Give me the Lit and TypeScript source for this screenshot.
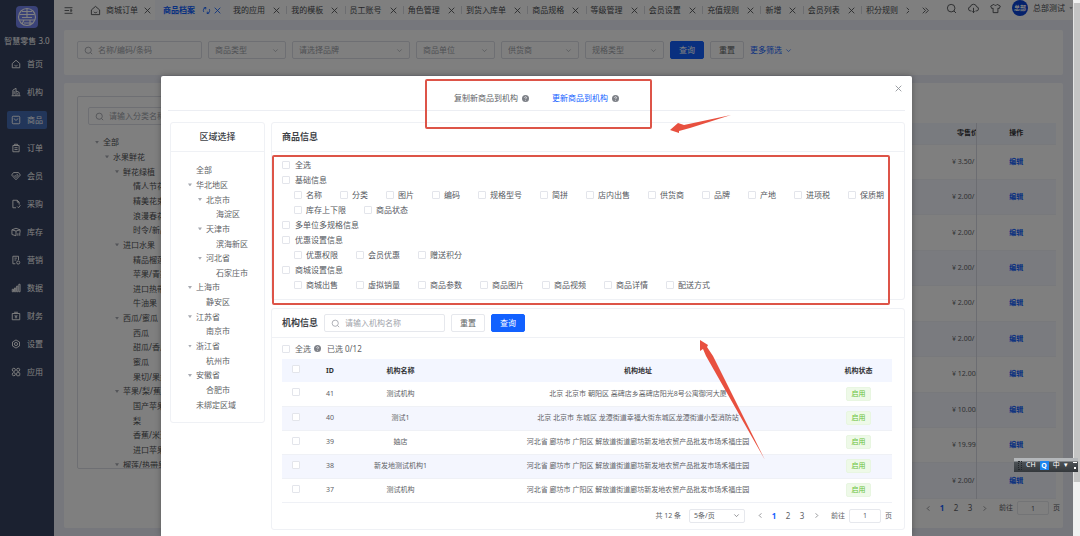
import { LitElement, html, css, svg, nothing } from "lit";
import { customElement, state } from "lit/decorators.js";
import { classMap } from "lit/directives/class-map.js";
import { styleMap } from "lit/directives/style-map.js";

const glyphs: Record<string, unknown> = {
  home: svg`<path d="M2 7.2 8 2l6 5.2V14H2z"/><path d="M5.5 10c1.4 1.6 3.6 1.6 5 0"/>`,
  org: svg`<path d="M3 14V5l5-3v12M8 6.500l5 2V14M1 14h14M5 6.500v5M10.500 10v2"/>`,
  goods: svg`<rect x="2" y="2" width="12" height="12" rx="1.5"/><path d="M5 5.5c.8 3.6 5.200 3.6 6 0"/>`,
  order: svg`<path d="M3 4h10v10H3zM5.500 4V2h5v2M5.500 7.500h5M5.500 10.500h5"/>`,
  member: svg`<path d="M4 2.500h8L15 6.500 8 14 1 6.500z"/><path d="M4.500 7 8 10.500 11.500 7 9.500 5.500 7 8"/>`,
  buy: svg`<path d="M8 14H3V2h7l3 3v4M10 2v3h3M10 12l2 2 3-4"/>`,
  stock: svg`<path d="M1.500 4.500 8 2l6.500 2.500V9M1.500 4.500V12L8 14V6.500M1.500 4.500 8 6.500l6.500-2M11 10v4M14 9v5"/>`,
  market: svg`<path d="M7 14H3V2h9v6M5.500 5h4M5.500 8h3"/><circle cx="11.500" cy="12" r="2.500"/>`,
  data: svg`<path d="M2 10h2v4H2zM5.500 8h2v6h-2zM9 5h2v9H9zM12.500 2h2v12h-2z"/>`,
  finance: svg`<path d="M2 4h12v10H2zM5 2h6M6 6.500 8 9l2-2.500M8 9v3M6 9.500h4"/>`,
  setting: svg`<path d="M8 1.500 13.600 4.800v6.400L8 14.500 2.400 11.200V4.800z"/><circle cx="8" cy="8" r="2.500"/>`,
  apps: svg`<circle cx="4.500" cy="4.500" r="2.500"/><circle cx="11.500" cy="4.500" r="2.500"/><circle cx="4.500" cy="11.500" r="2.500"/><rect x="9" y="9" width="5" height="5" rx="1"/>`,
  close: svg`<path d="M3 3l10 10M13 3 3 13"/>`,
  refresh: svg`<path d="M3 10.500A5.500 5.500 0 0 1 7 2.600M13 5.500a5.500 5.500 0 0 1-4 7.900M3 3.500l4-1-.5 3.500M13 12.500l-4 1 .5-3.500"/>`,
  fold: svg`<path d="M1 3h14M1 8h8M1 13h14M12 6l2.500 2L12 10z"/>`,
  search: svg`<circle cx="7.500" cy="7.500" r="5.500"/><path d="m11.500 11.500 3 3"/>`,
  down: svg`<path d="m3 5.500 5 5 5-5"/>`,
  left: svg`<path d="m10 3-5 5 5 5"/>`,
  right: svg`<path d="m6 3 5 5-5 5"/>`,
  more: svg`<path d="m3 3 5 5-5 5M8 3l5 5-5 5"/>`,
  cloud: svg`<path d="M5 11.500H4a3 3 0 0 1-.5-6 4.600 4.600 0 0 1 9 0 3 3 0 0 1-.5 6h-1M8 7v7M6 12l2 2 2-2"/>`,
  shirt: svg`<path d="M5.500 2 1 4.500l1.500 3.500L4.500 7.500V14h7V7.500l2 .5L15 4.500 10.500 2c-1 2-4 2-5 0z"/>`,
};

const icon = (name: string, kind = "") =>
  html`<svg class="icon ${kind}" viewBox="0 0 16 16" aria-hidden="true">${glyphs[name]}</svg>`;

const help = html`<svg class="help" viewBox="0 0 16 16" aria-hidden="true">
  <circle cx="8" cy="8" r="8" fill="#7d8087" />
  <path d="M5.700 6.300c0-3 4.600-3 4.600-.2C10.300 7.800 8 7.800 8 9.600" fill="none" stroke="#fff" stroke-width="1.600" />
  <circle cx="8" cy="12" r="1" fill="#fff" />
</svg>`;

type Node = [label: string, level: number, open?: boolean];

const menu: [string, string][] = [
  ["home", "首页"], ["org", "机构"], ["goods", "商品"], ["order", "订单"],
  ["member", "会员"], ["buy", "采购"], ["stock", "库存"], ["market", "营销"],
  ["data", "数据"], ["finance", "财务"], ["setting", "设置"], ["apps", "应用"],
];

const tabs = ["我的应用", "我的模板", "员工账号", "角色管理", "到货入库单", "商品规格",
  "等级管理", "会员设置", "充值规则", "新增", "会员列表", "积分规则"];

const filters: [string, number][] = [
  ["商品类型", 78], ["请选择品牌", 118], ["商品单位", 79], ["供货商", 78], ["规格类型", 79],
];

const categories: Node[] = [
  ["全部", 0, true], ["水果鲜花", 1, true], ["鲜花绿植", 2, true], ["情人节花束", 3],
  ["精美花束", 3], ["浪漫春花", 3], ["时令/新品", 3], ["进口水果", 2, true],
  ["精品榴莲", 3], ["苹果/青提", 3], ["进口热带果", 3], ["牛油果", 3],
  ["西瓜/蜜瓜", 2, true], ["西瓜", 3], ["甜瓜/香瓜", 3], ["蜜瓜", 3], ["果切/果盘", 3],
  ["苹果/梨/蕉", 2, true], ["国产苹果", 3], ["梨", 3], ["香蕉/米蕉", 3],
  ["进口苹果", 3], ["榴莲/热带果", 2, true],
];

const regions: Node[] = [
  ["全部", 0], ["华北地区", 0, true], ["北京市", 1, true], ["海淀区", 2],
  ["天津市", 1, true], ["滨海新区", 2], ["河北省", 1, true], ["石家庄市", 2],
  ["上海市", 0, true], ["静安区", 1], ["江苏省", 0, true], ["南京市", 1],
  ["浙江省", 0, true], ["杭州市", 1], ["安徽省", 0, true], ["合肥市", 1], ["未绑定区域", 0],
];

const fields: [string, string[]][] = [
  ["全选", []],
  ["基础信息", ["名称", "分类", "图片", "编码", "规格型号", "简拼", "店内出售", "供货商",
    "品牌", "产地", "进项税", "保质期", "库存上下限", "商品状态"]],
  ["多单位多规格信息", []],
  ["优惠设置信息", ["优惠权限", "会员优惠", "赠送积分"]],
  ["商城设置信息", ["商城出售", "虚拟销量", "商品参数", "商品图片", "商品视频", "商品详情", "配送方式"]],
];

const farm = "河北省 廊坊市 广阳区 解放道街道廊坊新发地农贸产品批发市场禾福庄园";
const orgs: [number, string, string][] = [
  [41, "测试机构", "北京 北京市 朝阳区 高碑店乡高碑店阳光8号公寓御河大厦"],
  [40, "测试1", "北京 北京市 东城区 龙潭街道幸福大街东城区龙潭街道小型消防站"],
  [39, "妯店", farm],
  [38, "新发地测试机构1", farm],
  [37, "测试机构", farm],
];

const prices = ["3.50", "2.00", "2.00", "2.00", "2.00", "2.00", "12.00", "10.00", "19.99", "2.00"];

@customElement("app-root")
export class AppRoot extends LitElement {
  @state() private mode = 1;

  static styles = css`
    :host {
      display: flex;
      position: relative;
      height: 100vh;
      overflow: hidden;
      font: 8px/12px "Noto Sans", "Noto Sans CJK SC", sans-serif;
      color: #606266;
    }
    * { box-sizing: border-box; }
    button, input, select {
      font: inherit;
      color: inherit;
      margin: 0;
      padding: 0;
      border: 0;
      background: none;
      border-radius: 2px;
      outline: 0;
    }
    a { color: inherit; text-decoration: none; }
    .icon {
      width: 9px;
      height: 9px;
      flex: none;
      fill: none;
      stroke: currentColor;
      stroke-width: 1.500;
    }
    .small { width: 7px; height: 7px; }
    .large { width: 11px; height: 11px; stroke-width: 1.300; }
    .help { width: 7px; height: 7px; flex: none; }

    .page { position: relative; display: flex; flex: 1; min-width: 0; background: #eceff8; }
    .rail { width: 7px; background: #f1f1f1; }
    .thumb { height: 90%; background: #c4c4c4; border-left: 1px solid #e4e4e4; border-top: 3px solid #f1f1f1; }

    .side { width: 54px; background: #364260; color: #fff; display: flex; flex-direction: column; align-items: center; padding-top: 6px; }
    .logo { width: 22px; height: 22px; }
    .brand { margin: 7px 0 8px; white-space: nowrap; }
    .menu { display: grid; gap: 10px; }
    .menu a { display: flex; align-items: center; gap: 6px; width: 40px; height: 18px; padding-left: 4px; border-radius: 2px; }
    .menu a .icon { width: 10px; height: 10px; }
    .menu a.on { background: #446cb4; }

    .main { flex: 1; min-width: 0; display: flex; flex-direction: column; }
    .top { display: flex; align-items: center; height: 20px; background: #fff; color: #4a4c50; white-space: nowrap; padding-left: 10px; }
    .top button { display: flex; }
    .first { display: flex; align-items: center; gap: 5px; padding: 0 3px 0 17px; }
    .active { display: flex; align-items: center; height: 20px; gap: 2px; padding: 0 8px; color: #1060ff; font-weight: 700; background: #f7f9ff; }
    .active a { margin-right: 5px; }
    .strip { flex: 1; min-width: 0; display: flex; align-items: center; justify-content: space-between; margin: 0 12px 0 3px; }
    .tab { display: flex; align-items: center; gap: 7px; height: 8px; }
    .tab + .tab { border-left: 1px solid #d8dae0; padding-left: 4px; }
    .tab:last-child button { width: 4px; overflow: hidden; }
    .tools { display: flex; align-items: center; gap: 11px; padding: 0 0 4px 16px; }
    .avatar { width: 16px; height: 16px; border-radius: 50%; background: #0b45d8; color: #fff; text-align: center; font-size: 6px; line-height: 16px; font-weight: 700; margin-right: -6px; }
    .user { display: flex; align-items: center; gap: 4px; }

    .panel { background: #fff; margin: 10px 10px 0; padding: 11px 13px; border-radius: 2px; }
    .filters { display: flex; gap: 6px; height: 46px; align-items: flex-start; }
    .box { display: flex; align-items: center; height: 18px; border: 1px solid #dcdfe6; border-radius: 2px; padding: 0 6px; gap: 5px; color: #a0a3aa; }
    .box input { flex: 1; width: 100%; min-width: 0; }
    .box input::placeholder { color: #a0a3aa; opacity: 1; }
    .box select { appearance: none; flex: 1; min-width: 0; height: 14px; }
    .wide { width: 125px; }
    .btn { height: 18px; width: 34px; border: 1px solid #dcdfe6; background: #fff; }
    .primary { background: #1261ff; border-color: #1261ff; color: #fff; }
    .link { display: flex; align-items: center; gap: 3px; height: 18px; color: #1261ff; }

    .stock { flex: 1; display: flex; gap: 20px; margin: 8px 10px 8px; padding: 13px 7px 13px 13px; }
    .cats { width: 170px; height: 373px; overflow: hidden; border: 1px solid #dcdfe6; border-radius: 2px; padding: 10px; }
    .tree { display: grid; grid-auto-rows: 1fr; margin: 0; padding: 0; list-style: none; white-space: nowrap; }
    .node { display: flex; align-items: center; gap: 4px; }
    .mark { width: 4px; height: 3px; background: #a8abb2; clip-path: polygon(0 0, 100% 0, 50% 100%); }
    .leaf { background: none; }
    .cats .tree { height: 337px; margin: 10px 0 0 7px; color: #505256; }
    .goods { flex: 1; min-width: 0; padding-top: 27px; }

    table { width: 100%; border-collapse: collapse; table-layout: fixed; font-size: 7px; line-height: 10px; text-align: center; }
    th, td { padding: 0; }
    th { color: #303133; background: #f3f6ff; font-weight: 700; }
    tbody tr:nth-child(even) { background: #f4f6fe; }
    .stocklist { height: 376px; }
    .stocklist th { height: 21px; }
    .stocklist tr { border-bottom: 1px solid #f0f2f8; }
    .money { width: 24px; text-align: left; white-space: nowrap; overflow: hidden; border-right: 1px solid #d8dbe4; }
    th.money { padding-left: 5px; }
    .act { width: 80px; }
    .act a { color: #1261ff; font-weight: 700; }

    .pager { display: flex; align-items: center; justify-content: flex-end; font-size: 7px; color: #606266; }
    .pager button { width: 14px; height: 14px; display: grid; place-items: center; font-size: 8px; }
    .pager .cur { color: #1261ff; font-weight: 700; }
    .pager input { width: 32px; height: 14px; border: 1px solid #dcdfe6; text-align: center; margin: 0 4px; }
    .pager .goto { padding-left: 8px; }
    .size { width: 56px; height: 14px; padding: 0 4px; margin: 0 8px; color: #606266; }
    .size select { height: 12px; }
    .goods .pager { padding-top: 2px; margin-right: -4px; }

    .mask { position: absolute; inset: 0; background: rgba(0, 0, 0, 0.5); display: flex; justify-content: center; padding-top: 76px; }
    .modal { position: relative; width: 70%; background: #fff; border-radius: 2px 2px 0 0; box-shadow: 0 0 6px rgba(0, 0, 0, 0.3); }
    .shut { position: absolute; top: 8px; right: 9px; display: flex; color: #8c8f95; }
    .modes { display: flex; justify-content: center; gap: 23px; height: 35px; margin: 0 7px; padding-top: 10px; border-bottom: 1px solid #eceef3; }
    .modes button { display: flex; align-items: center; gap: 4px; height: 24px; }
    .modes .cur { color: #1261ff; }
    .body { display: flex; align-items: flex-start; gap: 6px; padding: 11px 7px 0 9px; }
    .right { flex: 1; min-width: 0; display: grid; gap: 8px; }
    .card { border: 1px solid #eff1f5; border-radius: 3px; }
    .modal .box, .modal .btn:not(.primary), .pager input { border-color: #e6e8ed; }
    .area { width: 95px; }
    .head { display: flex; align-items: center; gap: 6px; height: 29px; padding: 0 10px; border-bottom: 1px solid #eff1f5; }
    .head h2 { margin: 0; font-size: 9px; line-height: 14px; font-weight: 700; color: #404247; }
    .area .head { justify-content: center; }
    .area .head h2 { font-weight: 500; }
    .area .tree { height: 249px; margin: 11px 0 10px 17px; }
    .fields { padding: 5px 10px 7px; color: #55585e; }
    .row { display: flex; flex-wrap: wrap; column-gap: 18px; padding-left: 12px; }
    .tick { display: flex; align-items: center; gap: 5px; height: 15px; }
    .check { appearance: none; display: inline-block; width: 8px; height: 8px; border: 1px solid #e3e5eb; border-radius: 1px; background: #fff; }
    .row .tick { gap: 4px; }
    .check:checked { background: #1261ff; border-color: #1261ff; }
    .find { width: 121px; }
    .sum { display: flex; align-items: center; height: 21px; gap: 3px; padding-left: 10px; }
    .sum span { padding-left: 3px; }
    .orgs { padding: 0 12px 0 10px; }
    .orgs th { height: 23px; }
    .orgs td { height: 24px; border-bottom: 1px solid #eff1f6; }
    .pick { width: 28px; }
    .pick .check { vertical-align: middle; margin-bottom: 3px; }
    .no { width: 40px; }
    .name { width: 101px; }
    .state { width: 67px; }
    .tag { display: inline-block; width: 25px; height: 14px; line-height: 12px; border: 1px solid #e8f6e1; border-radius: 2px; background: #eef9e8; color: #67c23a; }
    .orgs .pager { height: 26px; }

    .notes { position: absolute; top: 0; left: 0; width: 1080px; height: 536px; pointer-events: none; }
    .ime { position: absolute; right: 2px; top: 458px; width: 64px; height: 14px; display: flex; align-items: center; gap: 4px; padding-left: 4px; color: #fff; font-size: 7px; background: linear-gradient(#b4b7ba 0, #b4b7ba 3px, #4d5256 4px, #34383c 100%); }
    .ime b { width: 9px; height: 9px; line-height: 9px; background: #1c84ee; text-align: center; }
    .grip { width: 4px; height: 9px; border: 1px dotted #23272a; }
    .bars { width: 4px; height: 7px; border-top: 1px solid #fff; background: linear-gradient(#fff, #fff) 50% 100% / 2px 2px no-repeat; margin-left: 1px; }
  `;

  private tree(nodes: Node[]) {
    return html`<ul class="tree">
      ${nodes.map(([label, level, open]) => html`
        <li class="node" style=${styleMap({ paddingLeft: `${level * 10}px` })}>
          <i class=${classMap({ mark: true, leaf: !open })}></i>${label}
        </li>`)}
    </ul>`;
  }

  private pages(id: string) {
    return html`
      <button aria-label="上一页">${icon("left", "small")}</button>
      <button class="cur">1</button><button>2</button><button>3</button>
      <button aria-label="下一页">${icon("right", "small")}</button>
      <label class="goto" for=${id}>前往</label><input id=${id} value="1" />页`;
  }

  private check(label: string) {
    return html`<label class="tick"><input class="check" type="checkbox" />${label}</label>`;
  }

  private sidebar() {
    return html`<aside class="side">
      <svg class="logo" viewBox="0 0 22 22" aria-hidden="true">
        <rect width="22" height="22" rx="4" fill="#7484f0" />
        <g fill="none" stroke="#fff" stroke-width="1.100">
          <circle cx="11" cy="11" r="8.500" />
          <path d="M6 5.500h10M3.500 8.500h15M11 3v8M6 11.500h10M3 14h16M8 14l-2 4M14 14v5M8 17h8" />
        </g>
      </svg>
      <div class="brand">智慧零售 3.0</div>
      <nav class="menu">
        ${menu.map(([name, label]) => html`
          <a href="#" class=${label === "商品" ? "on" : ""}>${icon(name)}${label}</a>`)}
      </nav>
    </aside>`;
  }

  private topbar() {
    return html`<header class="top">
      <button aria-label="收起菜单">${icon("fold")}</button>
      <div class="first">${icon("home", "large")}<a href="#">商城订单</a>
        <button aria-label="关闭">${icon("close")}</button></div>
      <div class="active"><a href="#">商品档案</a>
        <button aria-label="刷新">${icon("refresh")}</button>
        <button aria-label="关闭">${icon("close")}</button></div>
      <nav class="strip">
        ${tabs.map((t) => html`<div class="tab"><a href="#">${t}</a>
          <button aria-label="关闭">${icon("close")}</button></div>`)}
      </nav>
      <button aria-label="更多">${icon("more")}</button>
      <div class="tools">
        ${icon("search", "large")}${icon("cloud", "large")}${icon("shirt", "large")}
        <div class="avatar">总部</div><div class="user">总部测试<i class="mark"></i></div>
      </div>
    </header>`;
  }

  private catalogue() {
    return html`
      <section class="panel filters">
        <label class="box wide">${icon("search")}<input placeholder="名称/编码/条码" aria-label="名称/编码/条码" /></label>
        ${filters.map(([label, width]) => html`
          <label class="box" style=${styleMap({ width: `${width}px` })}>
            <select aria-label=${label}><option>${label}</option></select>${icon("down", "small")}
          </label>`)}
        <button class="btn primary">查询</button>
        <button class="btn">重置</button>
        <a class="link" href="#">更多筛选${icon("down", "small")}</a>
      </section>
      <section class="panel stock">
        <div class="cats">
          <label class="box">${icon("search")}<input placeholder="请输入分类名称" aria-label="请输入分类名称" /></label>
          ${this.tree(categories)}
        </div>
        <div class="goods">
          <table class="stocklist">
            <thead><tr><th></th><th class="money">零售价</th><th class="act">操作</th></tr></thead>
            <tbody>
              ${prices.map((p) => html`<tr><td></td><td class="money">¥ ${p}/</td>
                <td class="act"><a href="#">编辑</a></td></tr>`)}
            </tbody>
          </table>
          <div class="pager">${this.pages("goods-page")}</div>
        </div>
      </section>`;
  }

  private dialog() {
    return html`<div class="mask"><div class="modal" role="dialog">
      <button class="shut" aria-label="关闭">${icon("close")}</button>
      <div class="modes">
        ${["复制新商品到机构", "更新商品到机构"].map((t, i) => html`
          <button class=${i === this.mode ? "cur" : ""} @click=${() => (this.mode = i)}>${t}${help}</button>`)}
      </div>
      <div class="body">
        <section class="card area">
          <div class="head"><h2>区域选择</h2></div>
          ${this.tree(regions)}
        </section>
        <div class="right">
          <section class="card">
            <div class="head"><h2>商品信息</h2></div>
            <div class="fields">
              ${fields.map(([group, items]) => html`${this.check(group)}
                ${items.length ? html`<div class="row">${items.map((f) => this.check(f))}</div>` : nothing}`)}
            </div>
          </section>
          <section class="card">
            <div class="head">
              <h2>机构信息</h2>
              <label class="box find">${icon("search")}<input placeholder="请输入机构名称" aria-label="请输入机构名称" /></label>
              <button class="btn">重置</button>
              <button class="btn primary">查询</button>
            </div>
            <div class="sum">${this.check("全选")}${help}<span>已选 0/12</span></div>
            <div class="orgs">
              <table>
                <thead><tr>
                  <th class="pick"><input class="check" type="checkbox" aria-label="全部机构" /></th>
                  <th class="no">ID</th><th class="name">机构名称</th><th>机构地址</th><th class="state">机构状态</th>
                </tr></thead>
                <tbody>
                  ${orgs.map(([id, name, address]) => html`<tr>
                    <td class="pick"><input class="check" type="checkbox" aria-label=${name} /></td>
                    <td>${id}</td><td>${name}</td><td>${address}</td><td><span class="tag">启用</span></td>
                  </tr>`)}
                </tbody>
              </table>
              <div class="pager">共 12 条
                <label class="box size"><select aria-label="每页条数"><option>5条/页</option></select>${icon("down", "small")}</label>
                ${this.pages("org-page")}
              </div>
            </div>
          </section>
        </div>
      </div>
    </div></div>`;
  }

  render() {
    return html`
      <div class="page">
        ${this.sidebar()}
        <main class="main">${this.topbar()}${this.catalogue()}</main>
        ${this.dialog()}
      </div>
      <div class="rail"><div class="thumb"></div></div>
      <svg class="notes" viewBox="0 0 1080 536" aria-hidden="true">
        <g fill="none" stroke="#dd5448" stroke-width="2">
          <rect x="426" y="80" width="225" height="48" rx="1" />
          <rect x="273" y="156" width="616" height="148" rx="1" />
        </g>
        <path fill="#e8503f" d="M731 115 684 125 678 123 670 130 679 133 679 131 690 128z" />
        <path fill="#e8503f" d="M765 460 706 356 703 349 700 351 700 340 708 345 707 347 713 356z" />
      </svg>
      <div class="ime"><i class="grip"></i>CH<b>Q</b>中<span>▾</span><i class="bars"></i></div>`;
  }
}
